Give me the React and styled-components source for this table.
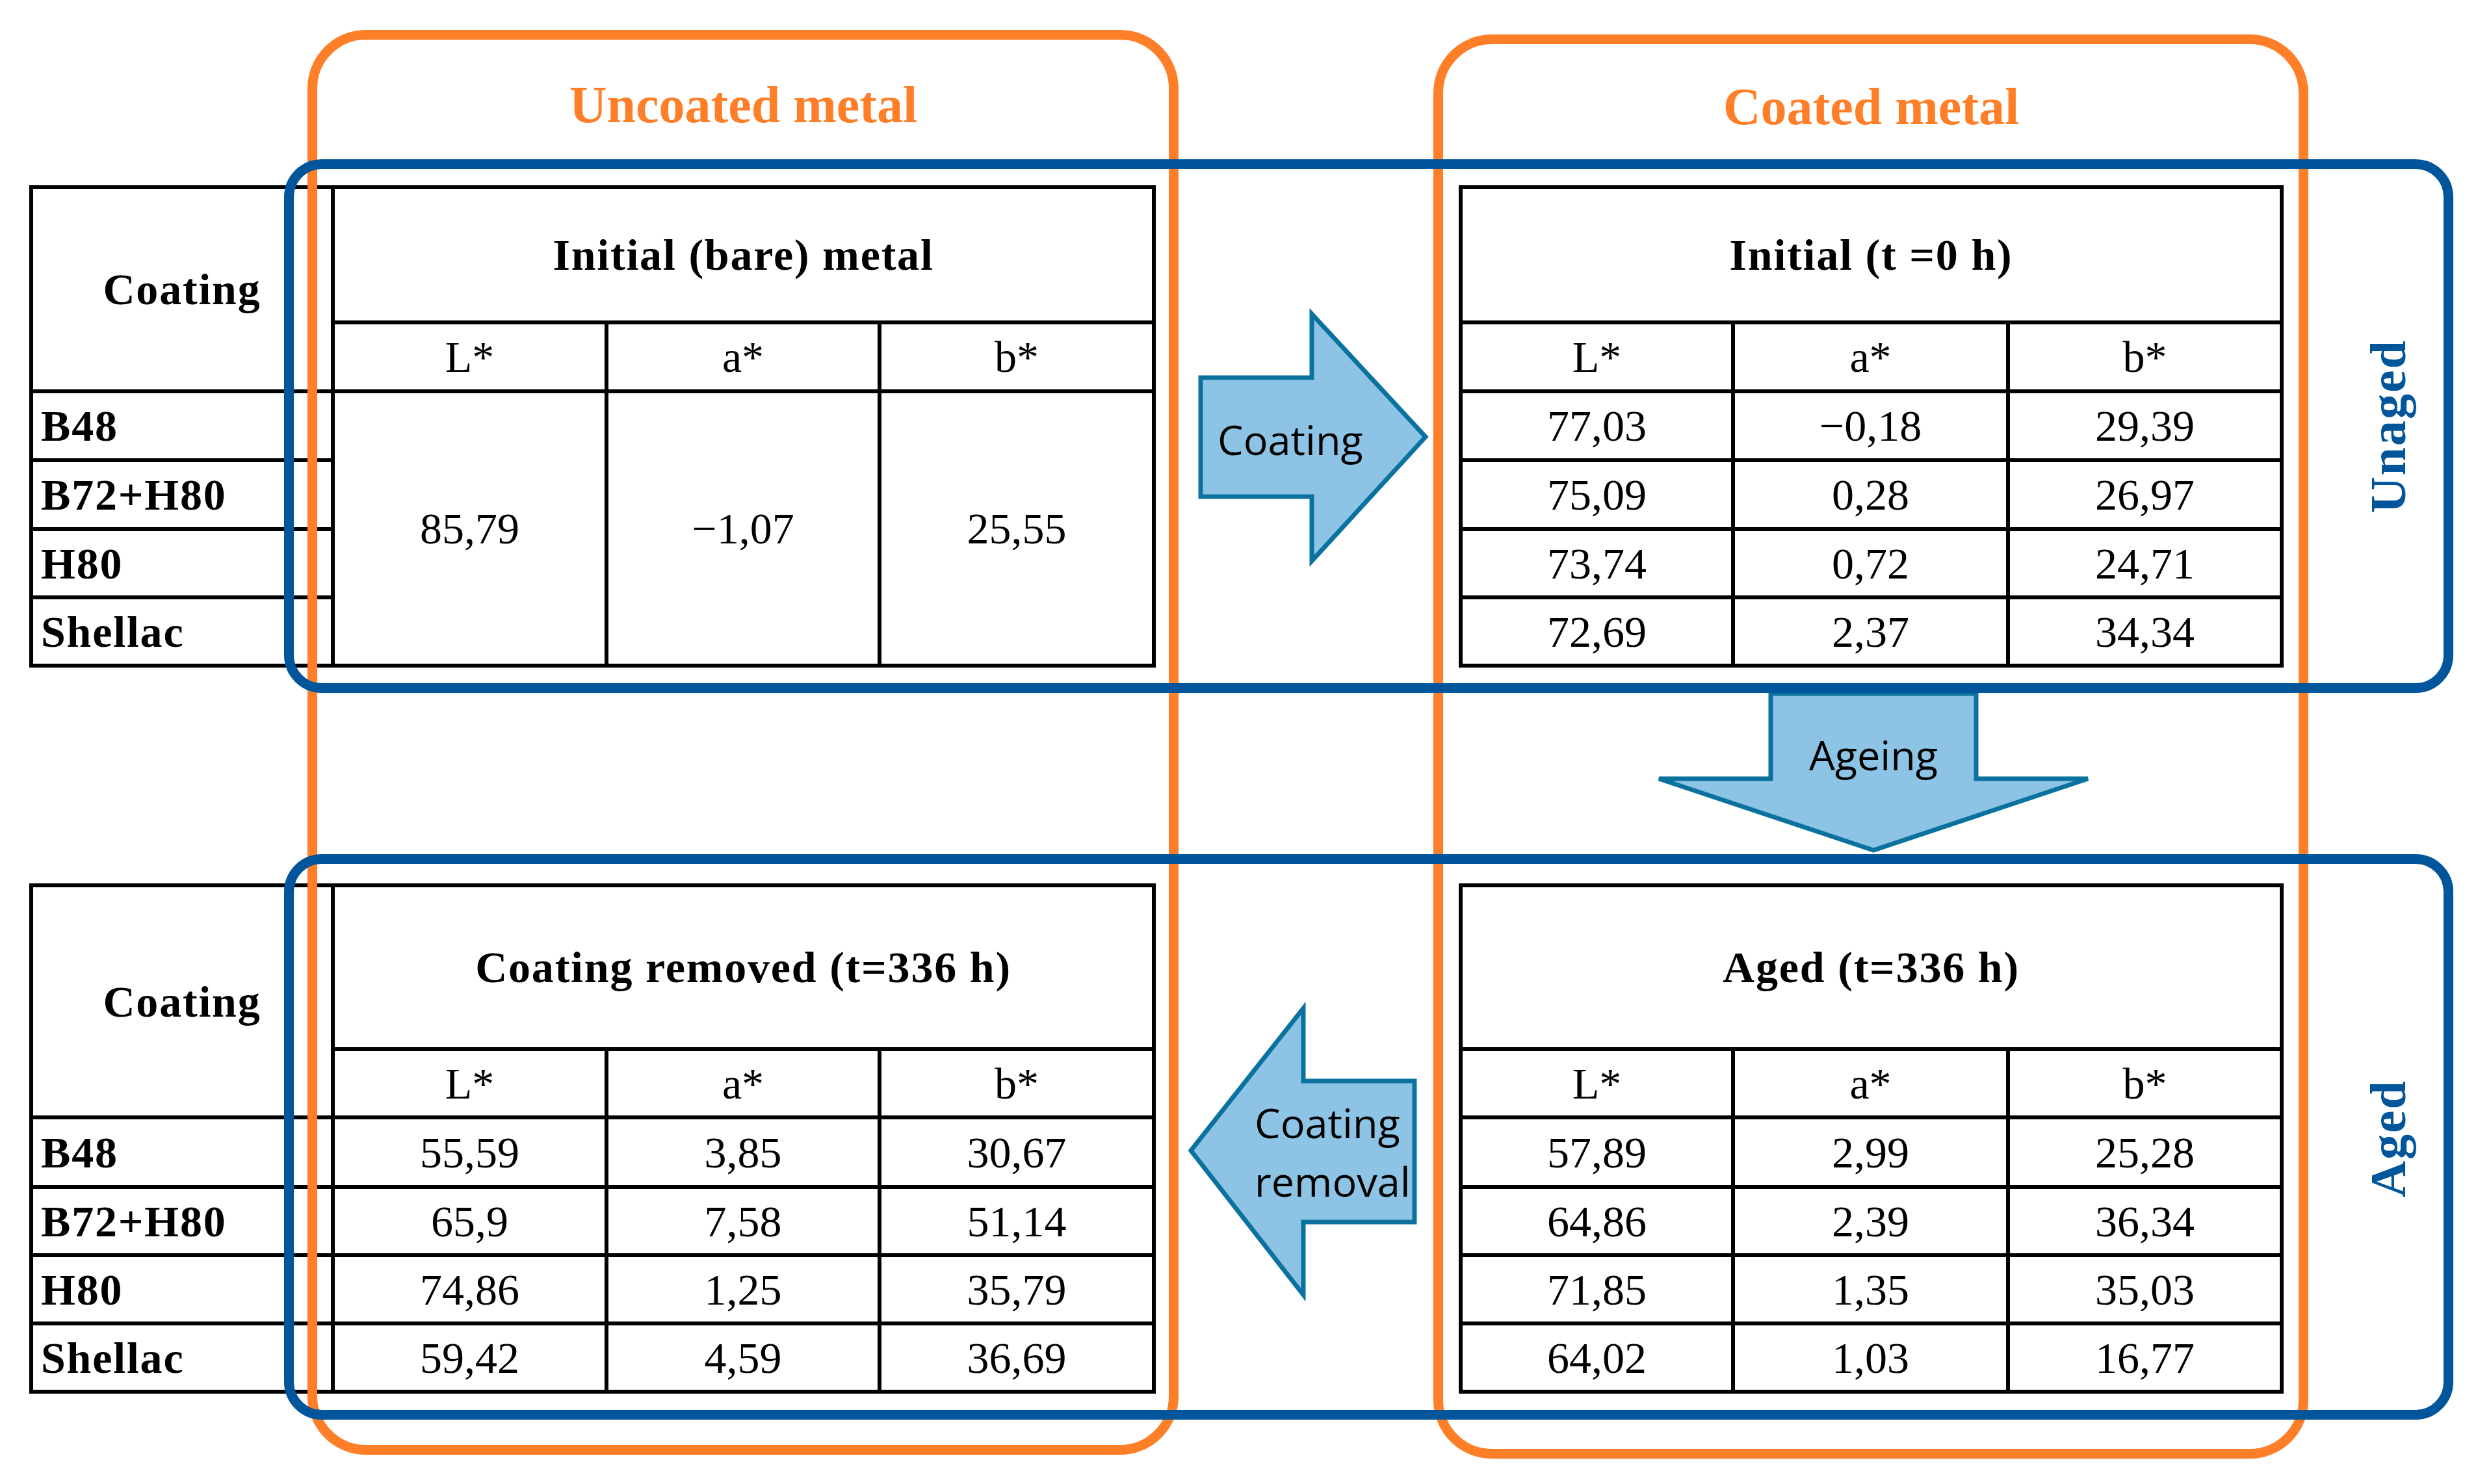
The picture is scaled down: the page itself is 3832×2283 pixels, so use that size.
import React from "react";
import styled, { createGlobalStyle } from "styled-components";

const ORANGE = "#fe7f28";
const BLUE = "#00559b";
const ARROW_FILL = "#8dc4e6";
const ARROW_LINE = "#0b72a0";
const SERIF = `"Liberation Serif", "Times New Roman", serif`;
const SANS = `"Open Sans", "Noto Sans", sans-serif`;

const GlobalStyle = createGlobalStyle`
  html, body {
    margin: 0;
    padding: 0;
    background: #fff;
  }
  body {
    font-family: ${SERIF};
    color: #000;
  }
`;

export default function App() {
  return (
    <>
      <GlobalStyle />
      <Canvas>
        <Layout>
          <TitleCell $top={121} $indent={464}>
            <Title>Uncoated metal</Title>
          </TitleCell>
          <div />
          <TitleCell $top={124}>
            <Title>Coated metal</Title>
          </TitleCell>
          <div />

          <Table $cols="464px 421px 420px 422px" $rows="208px 106px 106px 106px 105px 105px">
            <Cell $bold $rowSpan={2}>Coating</Cell>
            <Cell $bold $colSpan={3}>Initial (bare) metal</Cell>
            <Cell>L*</Cell>
            <Cell>a*</Cell>
            <Cell>b*</Cell>
            <Cell $bold $left $col={1} $row={3}>B48</Cell>
            <Cell $rowSpan={4} $col={2} $row={3}>85,79</Cell>
            <Cell $rowSpan={4} $col={3} $row={3}>−1,07</Cell>
            <Cell $rowSpan={4} $col={4} $row={3}>25,55</Cell>
            <Cell $bold $left $col={1} $row={4}>B72+H80</Cell>
            <Cell $bold $left $col={1} $row={5}>H80</Cell>
            <Cell $bold $left $col={1} $row={6}>Shellac</Cell>
          </Table>

          <ArrowSlot $left={62} $top={191}>
            <ArrowBox $w={360} $h={394} $padLeft={33} $padTop={4}>
              <ArrowShape viewBox="0 0 360 394">
                <polygon points="7,105 178,105 178,7 353,196 178,387 178,288 7,288" />
              </ArrowShape>
              <ArrowText>Coating</ArrowText>
            </ArrowBox>
          </ArrowSlot>

          <Table $cols="419px 423px 421px" $rows="208px 106px 106px 106px 105px 105px">
            <Cell $bold $colSpan={3}>Initial (t =0 h)</Cell>
            <Cell>L*</Cell>
            <Cell>a*</Cell>
            <Cell>b*</Cell>
            {unagedRows.map((r) => r.map((v, i) => <Cell key={v + i}>{v}</Cell>))}
          </Table>

          <SideCell>
            <SideLabel>Unaged</SideLabel>
          </SideCell>

          <div />
          <div />
          <ArrowSlot $left={301} $top={33}>
            <ArrowBox $w={674} $h={255} $center $top $padTop={69}>
              <ArrowShape viewBox="0 0 674 255">
                <polygon points="179,7 495,7 495,138 667,138 337,248 7,138 179,138" />
              </ArrowShape>
              <ArrowText>Ageing</ArrowText>
            </ArrowBox>
          </ArrowSlot>
          <div />

          <Table $cols="464px 421px 420px 422px" $rows="252px 105px 107px 105px 105px 105px">
            <Cell $bold $rowSpan={2}>Coating</Cell>
            <Cell $bold $colSpan={3}>Coating removed (t=336 h)</Cell>
            <Cell>L*</Cell>
            <Cell>a*</Cell>
            <Cell>b*</Cell>
            {removedRows.map(([label, ...vals]) => (
              <React.Fragment key={label}>
                <Cell $bold $left>{label}</Cell>
                {vals.map((v, i) => (
                  <Cell key={i}>{v}</Cell>
                ))}
              </React.Fragment>
            ))}
          </Table>

          <ArrowSlot $left={47} $top={185}>
            <ArrowBox $w={358} $h={455} $padLeft={105}>
              <ArrowShape viewBox="0 0 358 455">
                <polygon points="7,226 180,7 180,119 351,119 351,336 180,336 180,448" />
              </ArrowShape>
              <ArrowText $lines>
                Coating
                <br />
                removal
              </ArrowText>
            </ArrowBox>
          </ArrowSlot>

          <Table $cols="419px 423px 421px" $rows="252px 105px 107px 105px 105px 105px">
            <Cell $bold $colSpan={3}>Aged (t=336 h)</Cell>
            <Cell>L*</Cell>
            <Cell>a*</Cell>
            <Cell>b*</Cell>
            {agedRows.map((r) => r.map((v, i) => <Cell key={v + i}>{v}</Cell>))}
          </Table>

          <SideCell>
            <SideLabel>Aged</SideLabel>
          </SideCell>
        </Layout>

        {/* group outlines drawn over the tables */}
        <Frame $color={ORANGE} $x={473} $y={46} $w={1340} $h={2192} $r={90} $z={2} />
        <Frame $color={ORANGE} $x={2205} $y={53} $w={1346} $h={2191} $r={90} $z={2} />
        <Frame $color={BLUE} $x={437} $y={245} $w={3337} $h={821} $r={58} $z={3} />
        <Frame $color={BLUE} $x={437} $y={1314} $w={3337} $h={870} $r={58} $z={3} />
      </Canvas>
    </>
  );
}

const unagedRows = [
  ["77,03", "−0,18", "29,39"],
  ["75,09", "0,28", "26,97"],
  ["73,74", "0,72", "24,71"],
  ["72,69", "2,37", "34,34"],
];

const agedRows = [
  ["57,89", "2,99", "25,28"],
  ["64,86", "2,39", "36,34"],
  ["71,85", "1,35", "35,03"],
  ["64,02", "1,03", "16,77"],
];

const removedRows = [
  ["B48", "55,59", "3,85", "30,67"],
  ["B72+H80", "65,9", "7,58", "51,14"],
  ["H80", "74,86", "1,25", "35,79"],
  ["Shellac", "59,42", "4,59", "36,69"],
];

const Canvas = styled.div`
  position: relative;
  width: 3832px;
  height: 2283px;
  overflow: hidden;
  background: #fff;
`;

const Layout = styled.div`
  display: grid;
  grid-template-columns: 1733px 466px 1269px 319px;
  grid-template-rows: 285px 742px 332px 785px;
  padding-left: 45px;
`;

const TitleCell = styled.div`
  display: flex;
  justify-content: center;
  align-items: flex-start;
  padding-top: ${(p) => p.$top}px;
  padding-left: ${(p) => p.$indent || 0}px;
`;

const Title = styled.span`
  font-family: ${SERIF};
  font-weight: bold;
  font-size: 80px;
  line-height: 80px;
  color: ${ORANGE};
  white-space: nowrap;
`;

const Table = styled.div`
  position: relative;
  z-index: 1;
  align-self: start;
  display: grid;
  grid-template-columns: ${(p) => p.$cols};
  grid-template-rows: ${(p) => p.$rows};
  border-top: 6px solid #000;
  border-left: 6px solid #000;
  background: #fff;
`;

const Cell = styled.div`
  display: flex;
  align-items: center;
  justify-content: ${(p) => (p.$left ? "flex-start" : "center")};
  padding-left: ${(p) => (p.$left ? 12 : 0)}px;
  border-right: 6px solid #000;
  border-bottom: 6px solid #000;
  font-family: ${SERIF};
  font-size: 68px;
  line-height: 1;
  font-weight: ${(p) => (p.$bold ? "bold" : "normal")};
  letter-spacing: ${(p) => (p.$bold ? "1.8px" : "0")};
  white-space: nowrap;
  ${(p) => (p.$col ? `grid-column-start: ${p.$col};` : "")}
  ${(p) => (p.$row ? `grid-row-start: ${p.$row};` : "")}
  ${(p) => (p.$colSpan ? `grid-column-end: span ${p.$colSpan};` : "")}
  ${(p) => (p.$rowSpan ? `grid-row-end: span ${p.$rowSpan};` : "")}
`;

const ArrowSlot = styled.div`
  display: flex;
  align-items: flex-start;
  padding-left: ${(p) => p.$left}px;
  padding-top: ${(p) => p.$top}px;
`;

const ArrowBox = styled.div`
  position: relative;
  z-index: 1;
  box-sizing: border-box;
  width: ${(p) => p.$w}px;
  height: ${(p) => p.$h}px;
  display: flex;
  align-items: ${(p) => (p.$top ? "flex-start" : "center")};
  justify-content: ${(p) => (p.$center ? "center" : "flex-start")};
  padding-left: ${(p) => p.$padLeft || 0}px;
  padding-top: ${(p) => p.$padTop || 0}px;
`;

const ArrowShape = styled.svg`
  position: absolute;
  inset: 0;
  width: 100%;
  height: 100%;
  overflow: visible;

  polygon {
    fill: ${ARROW_FILL};
    stroke: ${ARROW_LINE};
    stroke-width: 7;
    stroke-linejoin: miter;
  }
`;

const ArrowText = styled.span`
  position: relative;
  font-family: ${SANS};
  font-size: 63px;
  line-height: ${(p) => (p.$lines ? "90px" : "63px")};
  color: #000;
  white-space: nowrap;
`;

const SideCell = styled.div`
  display: flex;
  align-items: center;
  justify-content: center;
  padding-left: 2px;
`;

const SideLabel = styled.span`
  writing-mode: vertical-rl;
  transform: rotate(180deg);
  font-family: ${SERIF};
  font-weight: bold;
  font-size: 78px;
  line-height: 78px;
  letter-spacing: 2px;
  color: ${BLUE};
  white-space: nowrap;
`;

const Frame = styled.div`
  position: absolute;
  left: ${(p) => p.$x}px;
  top: ${(p) => p.$y}px;
  width: ${(p) => p.$w}px;
  height: ${(p) => p.$h}px;
  box-sizing: border-box;
  border: 15px solid ${(p) => p.$color};
  border-radius: ${(p) => p.$r}px;
  z-index: ${(p) => p.$z};
  pointer-events: none;
`;
